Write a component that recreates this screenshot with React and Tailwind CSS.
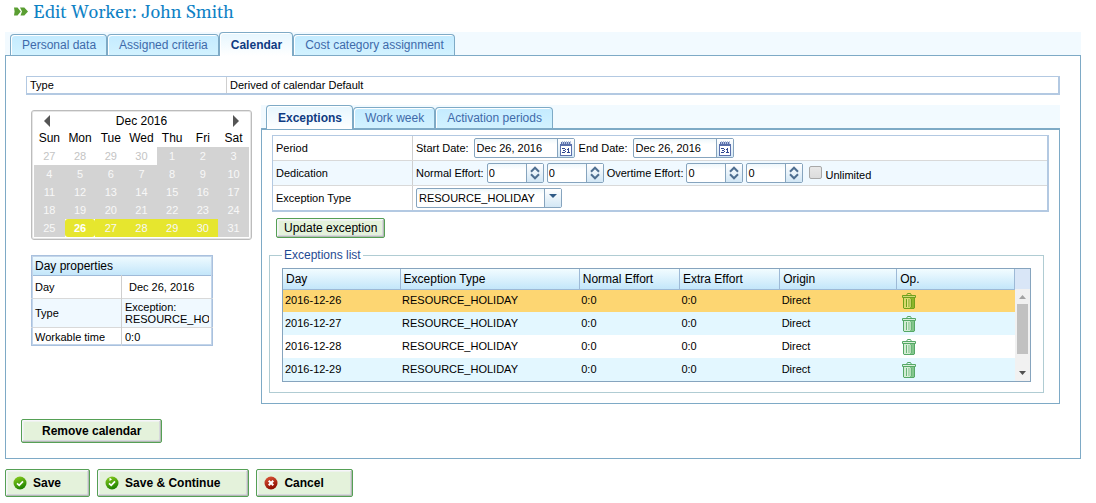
import React from "react";
import clsx from "clsx";

const MONTH_ROWS = [
  [27, 28, 29, 30, 1, 2, 3],
  [4, 5, 6, 7, 8, 9, 10],
  [11, 12, 13, 14, 15, 16, 17],
  [18, 19, 20, 21, 22, 23, 24],
  [25, 26, 27, 28, 29, 30, 31],
];

const EXCEPTIONS = ["2016-12-26", "2016-12-27", "2016-12-28", "2016-12-29"];

function Tabs({ items, active, label, thick }) {
  return (
    <div
      role="tablist"
      aria-label={label}
      className={clsx(
        "flex items-end bg-[#f2faff] px-[5px] border-[#7eaac6]",
        thick ? "h-[25px] border-b-2" : "h-6 border-b"
      )}
    >
      {items.map((t) => (
        <button
          key={t}
          type="button"
          role="tab"
          aria-selected={t === active}
          className={clsx(
            "rounded-t border border-b-0 border-[#7eaac6] pr-[10px] pl-[11px] text-xs shadow-[inset_1px_1px_0_#fff]",
            t === active
              ? "-mb-px h-6 bg-linear-to-b from-[#e6f6fe] to-white font-bold text-[#0f3b82]"
              : "h-[21px] bg-linear-to-b from-[#c4ebff] to-[#d2f2ff] text-[#3e6aaa]"
          )}
        >
          {t}
        </button>
      ))}
    </div>
  );
}

function GreenButton({ children, className }) {
  return (
    <button
      type="button"
      className={clsx(
        "flex items-center rounded-[2px] border border-[#55a055] bg-[#e4f2db] text-xs text-black shadow-[inset_-1px_-1px_0_#b4bab4,inset_1px_1px_0_#f7f5fa,inset_-2px_-2px_0_#d6d8dc,inset_2px_2px_0_#eef3ee]",
        className
      )}
    >
      {children}
    </button>
  );
}

function CalendarIcon() {
  return (
    <svg width="12" height="15" viewBox="0 0 12 15" shapeRendering="crispEdges">
      <path d="M1 3h10v11H1z" fill="#fff" />
      <path d="M0 3h12v12H0zM1 5v9h10V5z" fill="#5a70ac" fillRule="evenodd" />
      <path d="M1 3h10v2H1z" fill="#5a70ac" />
      <path d="M1 1h1v2H1zM3 1h1v2H3zM5 1h1v2H5zM7 1h1v2H7zM9 1h1v2H9z" fill="#5a70ac" />
      <path d="M2 0h1v3H2zM4 0h1v3H4zM6 0h1v3H6zM8 0h1v3H8zM10 0h1v3h-1z" fill="#b4c2e0" />
      <path d="M2 7h3v1H2zM5 8h1v1H5zM3 9h2v1H3zM5 10h1v1H5zM2 11h3v1H2zM8 7h1v4H8zM7 8h1v1H7zM7 11h3v1H7z" fill="#2f4690" />
    </svg>
  );
}

function DateBox({ id, label }) {
  return (
    <div className="flex items-center gap-[5px]">
      <label htmlFor={id}>{label}</label>
      <div className="flex h-5 rounded-[2px] border border-[#86a4be] bg-linear-to-b from-[#eef7fb] to-white to-30%">
        <input id={id} defaultValue="Dec 26, 2016" className="w-[82px] px-[2px] text-[11px] outline-none" />
        <button
          type="button"
          aria-label={"Pick " + label}
          className="flex w-[17px] items-center justify-center border-l border-[#86a4be] bg-linear-to-b from-white to-[#d3e7f5]"
        >
          <CalendarIcon />
        </button>
      </div>
    </div>
  );
}

function Spinner({ id, label }) {
  return (
    <div className="flex h-5 rounded-[2px] border border-[#86a4be] bg-linear-to-b from-[#eef7fb] to-white to-30%">
      <input id={id} aria-label={label} defaultValue="0" className="w-[38px] px-px text-[11px] outline-none" />
      <button
        type="button"
        aria-label={label + " step"}
        className="flex w-[17px] items-center justify-center border-l border-[#86a4be] bg-linear-to-b from-white to-[#d3e7f5]"
      >
        <svg width="10" height="14" viewBox="0 0 10 14" fill="none" stroke="#4e6e90" strokeWidth="2">
          <path d="M1 5.700 5 1.700 9 5.700M1 8.300 5 12.300 9 8.300" />
        </svg>
      </button>
    </div>
  );
}

function TrashIcon({ tint }) {
  return (
    <svg width="14" height="16" viewBox="0 0 14 16">
      <path d="M1.500 4.500h11v10.500l-.500.500h-10l-.500-.500z" fill={tint ? "#d9d96c" : "#d3ecd3"} stroke={tint ? "#6fa01c" : "#55a866"} />
      <path d="M8 5h4v10H8z" fill={tint ? "#8db52a" : "#83c68c"} />
      <path d="M4.500 6v8M7 6v8M9.500 6v8" stroke={tint ? "#6fa01c" : "#6ab578"} strokeWidth="1" />
      <path d="M5.700 6v8M8.200 6v8" stroke={tint ? "#eee79c" : "#e3f4e3"} strokeWidth=".8" />
      <path d="M.5 2.500h13v2H.5z" fill={tint ? "#cfd776" : "#d9efd9"} stroke={tint ? "#6fa01c" : "#55a866"} />
      <path d="M4.500 2.500l1-2h3l1 2" fill="none" stroke={tint ? "#6fa01c" : "#55a866"} />
    </svg>
  );
}

function StatusIcon({ kind }) {
  const ok = kind !== "cancel";
  return (
    <svg width="14" height="14" viewBox="0 0 14 14">
      <defs>
        <linearGradient id={"g-" + kind} x1="0" y1="0" x2="0.4" y2="1">
          <stop offset="0" stopColor={ok ? "#8fd020" : "#e05a3c"} />
          <stop offset="1" stopColor={ok ? "#218500" : "#8f0e00"} />
        </linearGradient>
      </defs>
      <circle cx="7" cy="7" r="6.500" fill={"url(#g-" + kind + ")"} />
      {ok ? (
        <path d="M4 7.300 6.200 9.400 10 5.300" fill="none" stroke="#fff" strokeWidth="1.700" />
      ) : (
        <path d="M4.700 4.700l4.600 4.600M9.300 4.700 4.700 9.300" stroke="#fff" strokeWidth="2" />
      )}
      {kind === "continue" && <path d="M4.500 1.500l2.500 2-2.500 1.500z" fill="#fff" />}
    </svg>
  );
}

function MonthCalendar() {
  return (
    <div className="rounded-[3px] border border-[#bcbcbc] p-[2px] shadow-[inset_0_0_0_1px_#e6e6e6]">
      <div className="flex h-4 items-center justify-between px-[10px] text-xs">
        <button type="button" aria-label="Previous month">
          <svg width="6" height="12" viewBox="0 0 6 12"><path d="M6 0v12L0 6z" fill="#555" /></svg>
        </button>
        <span>Dec 2016</span>
        <button type="button" aria-label="Next month">
          <svg width="6" height="12" viewBox="0 0 6 12"><path d="M0 0v12l6-6z" fill="#555" /></svg>
        </button>
      </div>
      <table className="w-full table-fixed text-center">
        <thead>
          <tr className="h-[18px] text-xs">
            {["Sun", "Mon", "Tue", "Wed", "Thu", "Fri", "Sat"].map((d) => (
              <th key={d} className="p-0 font-normal">{d}</th>
            ))}
          </tr>
        </thead>
        <tbody>
          {MONTH_ROWS.map((row, r) => (
            <tr key={r} className="h-[18px] leading-[18px]">
              {row.map((d, c) => {
                const outside = r === 0 && c < 4;
                const marked = r === 4 && c > 0 && c < 6;
                return (
                  <td
                    key={c}
                    className={clsx(
                      "p-0",
                      outside ? "text-[#c4c4c4]" : "text-[#f8f8f8]",
                      !outside && (marked ? "bg-[#e6e62e]" : "bg-[#d3d3d3]"),
                      marked && d === 26 && "rounded-[3px] font-bold text-white"
                    )}
                  >
                    {d}
                  </td>
                );
              })}
            </tr>
          ))}
        </tbody>
      </table>
    </div>
  );
}

function DayProperties() {
  return (
    <table className="w-full table-fixed border border-[#a9c1de] text-left outline outline-[#c3d5ea] -outline-offset-2">
      <colgroup>
        <col className="w-[90px]" />
        <col />
      </colgroup>
      <thead>
        <tr className="h-5 border-b border-[#9fbad8] bg-linear-to-b from-[#f0fbff] to-[#c3e6fa] text-xs">
          <th colSpan="2" className="px-[3px] py-0 font-normal">Day properties</th>
        </tr>
      </thead>
      <tbody>
        <tr className="h-[23px] border-b border-[#d9d9d9]">
          <th className="border-r border-[#cfcfcf] px-[3px] py-0 font-normal">Day</th>
          <td className="px-[7px] py-0">Dec 26, 2016</td>
        </tr>
        <tr className="h-[29px] border-b border-[#d9d9d9] bg-[#f0f9ff]">
          <th className="border-r border-[#cfcfcf] px-[3px] py-0 font-normal">Type</th>
          <td className="px-[3px] py-0 leading-3">
            <div className="overflow-hidden">Exception:<br />RESOURCE_HOLIDAY</div>
          </td>
        </tr>
        <tr className="h-[18px]">
          <th className="border-r border-[#cfcfcf] px-[3px] py-0 font-normal">Workable time</th>
          <td className="px-[3px] py-0">0:0</td>
        </tr>
      </tbody>
    </table>
  );
}

function FormRow({ label, shaded, last, children }) {
  return (
    <div className={clsx("flex items-stretch", last ? "h-6" : "h-[25px] border-b border-[#d9d9d9]", shaded && "bg-[#f0f9ff]")}>
      <div className="flex w-[140px] shrink-0 items-center border-r border-[#cfcfcf] pl-[3px]">{label}</div>
      <div className="flex items-center pl-[3px]">{children}</div>
    </div>
  );
}

function ExceptionForm() {
  return (
    <div className="border border-r-2 border-b-2 border-[#b3c9e2]">
      <FormRow label="Period">
        <div className="flex gap-1">
          <DateBox id="start" label="Start Date:" />
          <DateBox id="end" label="End Date:" />
        </div>
      </FormRow>
      <FormRow label="Dedication" shaded>
        <div className="flex items-center gap-[3px]">
          <label htmlFor="normal-h">Normal Effort:</label>
          <Spinner id="normal-h" label="Normal Effort hours" />
          <Spinner id="normal-m" label="Normal Effort minutes" />
          <label htmlFor="over-h">Overtime Effort:</label>
          <Spinner id="over-h" label="Overtime Effort hours" />
          <Spinner id="over-m" label="Overtime Effort minutes" />
        </div>
        <input
          id="unlimited"
          type="checkbox"
          className="mt-[5px] mr-[3px] ml-[6px] size-[13px] appearance-none self-start rounded-[2px] border border-[#a8a8a8] bg-linear-to-b from-[#e8e8e8] to-[#dcdcdc]"
        />
        <label htmlFor="unlimited" className="pt-1">Unlimited</label>
      </FormRow>
      <FormRow label={<label htmlFor="exc-type">Exception Type</label>} last>
        <div className="grid h-5 grid-cols-[127px_17px] rounded-[2px] border border-[#86a4be] bg-linear-to-b from-[#eef7fb] to-white to-30%">
          <select id="exc-type" className="col-span-2 col-start-1 row-start-1 appearance-none px-[2px] text-[11px] outline-none">
            <option>RESOURCE_HOLIDAY</option>
          </select>
          <span className="pointer-events-none col-start-2 row-start-1 flex justify-center border-l border-[#86a4be] bg-linear-to-b from-white to-[#d3e7f5] pt-[5px]">
            <svg width="8" height="4" viewBox="0 0 8 4"><path d="M0 0h8L4 4z" fill="#2f5a86" /></svg>
          </span>
        </div>
      </FormRow>
    </div>
  );
}

function ExceptionList() {
  const heads = ["Day", "Exception Type", "Normal Effort", "Extra Effort", "Origin", "Op."];
  return (
    <div className="flex border border-[#86a4be]">
      <table className="min-w-0 flex-1 table-fixed text-left">
        <colgroup>
          <col className="w-[16%]" />
          <col className="w-[24.500%]" />
          <col className="w-[13.700%]" />
          <col className="w-[13.700%]" />
          <col className="w-[16%]" />
          <col />
        </colgroup>
        <thead>
          <tr className="h-5 bg-linear-to-b from-[#f2fcff] to-[#c3e6fa] text-xs">
            {heads.map((h) => (
              <th key={h} className="border-r border-b border-[#9db9d6] px-[3px] py-0 font-normal">{h}</th>
            ))}
          </tr>
        </thead>
        <tbody>
          {EXCEPTIONS.map((day, i) => (
            <tr
              key={day}
              className={clsx("h-[23px]", i === 0 ? "bg-[#fdd672]" : i % 2 ? "bg-[#e3f7ff]" : "bg-white")}
            >
              <td className="px-[2px] pt-0 pb-px">{day}</td>
              <td className="px-[2px] pt-0 pb-px">RESOURCE_HOLIDAY</td>
              <td className="px-[2px] pt-0 pb-px">0:0</td>
              <td className="px-[2px] pt-0 pb-px">0:0</td>
              <td className="px-[2px] pt-0 pb-px">Direct</td>
              <td className="px-[5px] py-0">
                <button type="button" aria-label={"Delete " + day} className="block pt-px">
                  <TrashIcon tint={i === 0} />
                </button>
              </td>
            </tr>
          ))}
        </tbody>
      </table>
      <div aria-hidden="true" className="flex w-[15px] flex-col">
        <div className="h-5 bg-[#d9e6f7]" />
        <div className="flex flex-1 flex-col items-center bg-[#f1f1f1] pt-[6px] pb-[6px]">
          <svg width="7" height="4" viewBox="0 0 7 4"><path d="M0 4h7L3.500 0z" fill="#a3a3a3" /></svg>
          <div className="mt-[5px] h-[50px] w-[11px] bg-[#c1c1c1]" />
          <svg className="mt-auto" width="7" height="4" viewBox="0 0 7 4"><path d="M0 0h7L3.500 4z" fill="#505050" /></svg>
        </div>
      </div>
    </div>
  );
}

export default function App() {
  return (
    <main className="bg-white pr-[15px] pl-[5px] font-['Liberation_Sans',Arial,sans-serif] text-[11px] leading-[14px] text-black">
      <h1 className="flex h-8 items-start gap-[5px] pl-[9px] font-['Gelasio','Georgia','Liberation_Serif',serif] text-[18px] leading-[26px] text-[#0f82c5]">
        <svg className="mt-[7px]" width="14" height="9" viewBox="0 0 14 9">
          <path d="M0 .5h3.500l3.300 4-3.300 4H0l.6-4zM6 .5h4.300l3.700 4-3.700 4H6.500l1.500-4z" fill="#5a9e32" />
        </svg>
        Edit Worker: John Smith
      </h1>

      <Tabs
        label="Worker"
        active="Calendar"
        items={["Personal data", "Assigned criteria", "Calendar", "Cost category assignment"]}
      />
      <section className="border border-t-0 border-[#7eaac6] pt-5 pr-5 pb-[15px] pl-[15px]">
        <div className="ml-[5px] flex h-[19px] items-center border border-r-2 border-b-2 border-[#b3c9e2]">
          <div className="flex h-full w-[200px] items-center border-r border-[#cfcfcf] pl-[3px]">Type</div>
          <div className="pl-[3px]">Derived of calendar Default</div>
        </div>

        <div className="mt-[10px] flex gap-[9px] pl-[10px]">
          <div className="w-[221px] shrink-0 pt-[5px]">
            <MonthCalendar />
            <div className="mt-[15px] w-[182px]">
              <DayProperties />
            </div>
          </div>

          <div className="min-w-0 flex-1">
            <Tabs
              thick
              label="Calendar details"
              active="Exceptions"
              items={["Exceptions", "Work week", "Activation periods"]}
            />
            <div className="border border-t-0 border-[#7eaac6] pt-[5px] pr-[10px] pb-[10px] pl-[10px]">
              <ExceptionForm />
              <GreenButton className="mt-[6px] ml-1 h-5 px-[7px]">Update exception</GreenButton>
              <fieldset className="mt-2 -ml-[3px] mr-[5px] border border-[#b0ccd3] px-3 pb-[10px]">
                <legend className="px-[2px] text-xs leading-[18px] text-[#1f4a93]">Exceptions list</legend>
                <div className="pt-1">
                  <ExceptionList />
                </div>
              </fieldset>
            </div>
          </div>
        </div>

        <GreenButton className="mt-[15px] h-6 px-5 font-bold">Remove calendar</GreenButton>
      </section>

      <div className="flex gap-[7px] pt-[10px]">
        <GreenButton className="h-7 gap-[6px] pr-7 pl-[7px] font-bold"><StatusIcon kind="save" />Save</GreenButton>
        <GreenButton className="h-7 gap-[6px] pr-7 pl-[7px] font-bold"><StatusIcon kind="continue" />Save &amp; Continue</GreenButton>
        <GreenButton className="h-7 gap-[6px] pr-7 pl-[7px] font-bold"><StatusIcon kind="cancel" />Cancel</GreenButton>
      </div>
    </main>
  );
}
